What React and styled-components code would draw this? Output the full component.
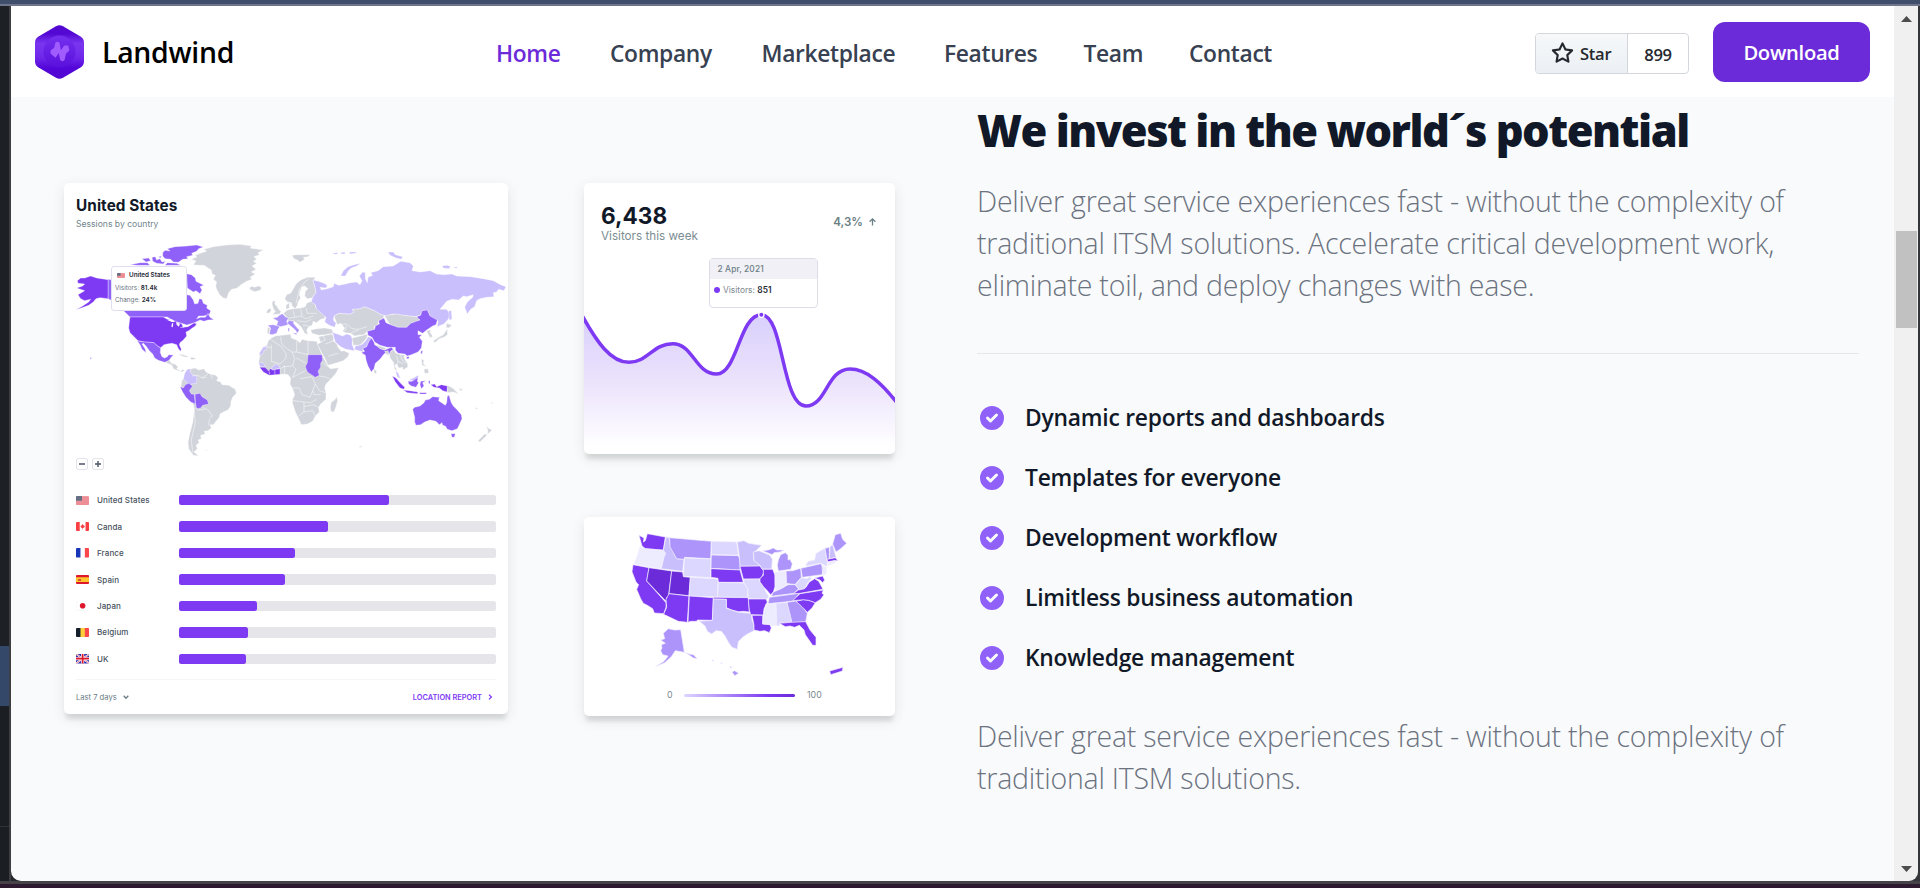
import React from "react";
import styled, { createGlobalStyle } from "styled-components";

const UI = '"Open Sans", "Noto Sans", sans-serif';
const CARD = 'Inter, "Liberation Sans", sans-serif';

const GlobalStyle = createGlobalStyle`
  * { box-sizing: border-box; }
  body { margin: 0; background: #3d3f43; font-family: ${UI}; overflow: hidden; }
  h2, p, ul { margin: 0; padding: 0; }
`;

/* ---------- window frame ---------- */
const Desktop = styled.div`
  display: grid;
  grid-template-rows: 6px 875px 7px;
  width: 1920px;
  height: 888px;
  overflow: hidden;
  background: #3d3f43;
`;
const TopEdge = styled.div`
  background: #3f4f6b;
  border-bottom: 2px solid #6e758d;
`;
const BottomEdge = styled.div`
  background: #2d1a30;
  border-top: 3px solid #454348;
`;
const Middle = styled.div`
  display: grid;
  grid-template-columns: 11px 1883px 24px 2px;
  background: linear-gradient(90deg, #24272b 50%, #34363a 50%);
`;
const LeftEdge = styled.div`
  border-right: 2px solid #3c3e42;
  background: linear-gradient(#1d2024 640px, #344869 640px, #344869 700px, #1b1e22 700px, #1b1e22 820px, #303236 820px, #303236 821px, #1b1e22 821px);
`;
const Viewport = styled.div`
  display: flex;
  flex-direction: column;
  background: #f9fafb;
  border-bottom-left-radius: 10px;
  overflow: hidden;
`;
const ScrollTrack = styled.div`
  display: flex;
  flex-direction: column;
  align-items: center;
  padding: 10px 0 9px;
  background: #f0f0f0;
  border-bottom-right-radius: 9px;
`;
const ScrollArrow = styled.svg`
  width: 11px;
  height: 6px;
  fill: #4d4d4d;
`;
const ScrollThumb = styled.div`
  width: 21px;
  height: 97px;
  margin: 209px 0 auto 1px;
  background: #c1c1c1;
`;

/* ---------- header ---------- */
const Header = styled.header`
  display: flex;
  align-items: center;
  height: 91px;
  flex: none;
  padding: 1px 24px 0;
  background: #fff;
`;
const Brand = styled.div`
  display: flex;
  align-items: center;
  gap: 18px;
  width: 461px;
  flex: none;
  font-size: 28.4px;
  font-weight: 600;
  letter-spacing: -0.28px;
  line-height: 40px;
  color: #000;
`;
const Logo = styled.svg`
  width: 49px;
  height: 54px;
`;
const Nav = styled.nav`
  display: flex;
  gap: 48px;
  flex: 1;
  padding-top: 3px;
`;
const NavLink = styled.a`
  width: ${(p) => p.$w}px;
  font-size: 22.8px;
  font-weight: 600;
  line-height: 36px;
  letter-spacing: -0.34px;
  white-space: nowrap;
  color: ${(p) => (p.$active ? "#6c2bd9" : "#374151")};
`;
const StarGroup = styled.div`
  display: flex;
  height: 41px;
  margin: 3px 24px 0 0;
  border: 1px solid #d3d7dc;
  border-radius: 4px;
  overflow: hidden;
  font-size: 16.6px;
  font-weight: 600;
  letter-spacing: -0.3px;
  line-height: 41px;
  color: #24292f;
`;
const StarButton = styled.div`
  display: flex;
  align-items: center;
  gap: 6px;
  width: 92px;
  padding-left: 15px;
  background: linear-gradient(#f6f8fa, #ebf0f4);
  border-right: 1px solid #d3d7dc;
`;
const StarCount = styled.div`
  width: 60px;
  text-align: center;
`;
const Download = styled.a`
  width: 157px;
  height: 60px;
  border-radius: 12px;
  background: #6c2bd9;
  color: #fff;
  font-size: 20.2px;
  font-weight: 600;
  letter-spacing: -0.3px;
  line-height: 61px;
  text-align: center;
`;

/* ---------- section ---------- */
const Section = styled.section`
  display: grid;
  grid-template-columns: 444px 311px 888px;
  column-gap: 76px;
  padding-left: 53px;
`;
const SideColumn = styled.div`
  display: flex;
  flex-direction: column;
  gap: 63px;
  padding-top: 86px;
`;
const Card = styled.article`
  position: relative;
  height: ${(p) => p.$h}px;
  border-radius: 5px;
  background: #fff;
  box-shadow: 0 7px 4px -2px rgba(40, 50, 45, 0.12), 0 4px 13px rgba(40, 50, 60, 0.1);
  font-family: ${CARD};
`;
const SessionsCard = styled(Card)`
  display: flex;
  flex-direction: column;
  padding: 13px 12px 0;
  margin-top: 86px;
`;
const CardTitle = styled.h2`
  font-size: 15.3px;
  line-height: 20px;
  font-weight: 700;
  letter-spacing: 0.08px;
  color: #111928;
`;
const CardSub = styled.p`
  margin-top: 1.5px;
  font-size: 8.6px;
  line-height: 12px;
  color: #72858c;
`;
const WorldFigure = styled.div`
  position: relative;
  height: 213px;
  margin: 11.5px -12px 0;
`;
const MapSvg = styled.svg`
  display: block;
  width: 100%;
  height: 100%;
  overflow: visible;
`;
const MapTooltip = styled.div`
  position: absolute;
  left: 47px;
  top: 25px;
  width: 76px;
  height: 45px;
  padding: 3px 3px 0;
  border: 1px solid #dfdff0;
  border-radius: 3px;
  background: #fff;
  font-size: 6.3px;
  line-height: 12px;
  color: #6b7280;
`;
const TipHead = styled.div`
  display: flex;
  align-items: center;
  gap: 4px;
  padding-left: 2px;
  margin-bottom: 1px;
  font-weight: 600;
  line-height: 11px;
  color: #1f2a37;
`;
const Strong = styled.b`
  font-weight: 600;
  color: #1f2a37;
`;
const ZoomRow = styled.div`
  display: flex;
  gap: 4px;
  margin-top: 4px;
`;
const ZoomButton = styled.svg`
  width: 12px;
  height: 12px;
  border: 1px solid #e3e5ea;
  border-radius: 2px;
  stroke: #4b5563;
  stroke-width: 1.4;
`;
const Bars = styled.div`
  display: grid;
  grid-auto-rows: 26.45px;
  margin-top: 17px;
`;
const BarRow = styled.div`
  display: grid;
  grid-template-columns: 21px 82px 1fr;
  align-items: center;
  font-size: 8px;
  font-weight: 500;
  letter-spacing: 0.1px;
  color: #475160;
`;
const FlagSvg = styled.svg`
  display: block;
  width: ${(p) => p.$w || 13.3}px;
  height: ${(p) => (p.$w ? 5.6 : 9.4)}px;
  border-radius: 1px;
`;
const Track = styled.div`
  height: 10.4px;
  border-radius: 2.5px;
  background: #e5e5ea;
`;
const Fill = styled.div`
  height: 100%;
  border-radius: 2.5px;
  background: #7e3af2;
`;
const CardFooter = styled.div`
  display: flex;
  justify-content: space-between;
  align-items: center;
  height: 35px;
  margin-top: 7px;
  padding-right: 3px;
  border-top: 1px solid #f5f5f7;
`;
const FooterItem = styled.span`
  display: flex;
  align-items: center;
  gap: ${(p) => (p.$link ? 5 : 6)}px;
  color: ${(p) => (p.$link ? "#7e3af2" : "#6b7c85")};
  font-weight: ${(p) => (p.$link ? 600 : 400)};
  font-size: ${(p) => (p.$link ? 7.4 : 7.6)}px;
`;
const Chevron = styled.svg`
  width: 6px;
  height: 6px;
  fill: none;
  stroke: currentColor;
  stroke-width: 1.3;
`;
const VisitorsHead = styled.div`
  display: flex;
  justify-content: space-between;
  padding: 20px 19px 0 17px;
`;
const BigNumber = styled.div`
  font-size: 22.6px;
  line-height: 26px;
  font-weight: 700;
  color: #111928;
`;
const NumberLabel = styled.div`
  font-size: 11.7px;
  line-height: 15px;
  color: #7b8d92;
`;
const Change = styled.div`
  display: flex;
  align-items: center;
  gap: 6px;
  height: 38px;
  font-size: 11.6px;
  font-weight: 600;
  color: #6a8084;
`;
const ChartSvg = styled.svg`
  position: absolute;
  left: 0;
  bottom: 0;
  width: 311px;
  height: 150px;
`;
const ChartTooltip = styled.div`
  position: absolute;
  left: 125px;
  top: 75px;
  width: 109px;
  height: 50px;
  border: 1px solid #dedce8;
  border-radius: 4px;
  background: #fff;
  font-size: 8.4px;
  color: #7b868d;
`;
const TipDate = styled.div`
  height: 20px;
  padding-left: 7.5px;
  background: #f1f0f6;
  line-height: 20px;
  font-weight: 500;
  letter-spacing: 0.1px;
  color: #6b7c85;
`;
const TipValue = styled.div`
  display: flex;
  align-items: center;
  gap: 3px;
  height: 21px;
  padding-left: 4px;
`;
const Dot = styled.i`
  width: 6px;
  height: 6px;
  border-radius: 50%;
  background: #7e3af2;
`;
const StatesSvg = styled.svg`
  display: block;
  width: 311px;
  height: 168px;
`;
const Legend = styled.div`
  display: grid;
  grid-template-columns: 17px 111px auto;
  align-items: center;
  padding-left: 83px;
  font-size: 8.8px;
  line-height: 20px;
  color: #7b8a90;
`;
const LegendBar = styled.div`
  height: 3px;
  border-radius: 2px;
  background: linear-gradient(90deg, #ddd6fe, #7e3af2 75%, #6c2bd9);
`;
const LegendMax = styled.span`
  padding-left: 12px;
`;

/* ---------- copy ---------- */
const Copy = styled.div`
  padding-top: 8px;
  margin-left: 6px;
`;
const Headline = styled.h2`
  height: 75px;
  font-size: 43.4px;
  line-height: 52px;
  font-weight: 800;
  letter-spacing: -1.5px;
  white-space: nowrap;
  color: #111928;
`;
const Lead = styled.p`
  font-size: 28.5px;
  line-height: 42px;
  font-weight: 300;
  letter-spacing: -0.23px;
  white-space: nowrap;
  color: #6b7280;
`;
const Features = styled.ul`
  display: grid;
  grid-auto-rows: 30px;
  row-gap: 30px;
  margin: 47px 0 42px;
  padding-top: 49px;
  border-top: 1px solid #e5e7eb;
  list-style: none;
`;
const Feature = styled.li`
  display: flex;
  align-items: center;
  gap: 18px;
  font-size: 22.8px;
  font-weight: 600;
  letter-spacing: -0.22px;
  line-height: 30px;
  color: #111928;
`;
const Check = styled.svg`
  width: 30px;
  height: 30px;
  fill: #9061f9;
`;

/* ---------- data ---------- */
const NAV = [
  ["Home", 66],
  ["Company", 103.5],
  ["Marketplace", 134.5],
  ["Features", 91.5],
  ["Team", 57.5],
  ["Contact", 85],
];

const COUNTRIES = [
  ["us", "United States", 66.2],
  ["ca", "Canda", 46.9],
  ["fr", "France", 36.5],
  ["es", "Spain", 33.3],
  ["jp", "Japan", 24.5],
  ["be", "Belgium", 21.8],
  ["uk", "UK", 21.1],
];

const C = { g: "#d1d5db", d: "#7e3af2", m: "#9061f9", s: "#ac94fa", l: "#cabffd", x: "#6c2bd9", p: "#dcd7fe", w: "#edebfe" };

const WORLD = [
  ["g", "M424,270 440,263 436,258 455,250 470,246 462,240 490,232 530,227 570,225 605,230 600,236 640,242 624,250 628,256 612,262 620,270 610,276 620,282 606,290 618,300 604,308 616,314 600,324 606,330 590,336 575,345 560,357 545,360 536,370 530,388 520,386 509,376 500,360 497,350 500,338 490,330 496,318 486,314 484,302 474,296 462,288 445,288 430,286 438,275Z"],
  ["g", "M598,356 606,350 612,354 626,350 634,354 632,362 615,367 603,363Z"],
  ["m", "M338,250 345,243 360,245 352,238 375,232 410,230 440,227 460,233 446,238 440,246 425,252 428,258 410,262 414,268 398,270 385,279 370,278 362,270 345,268 338,260Z"],
  ["m", "M306,264 316,262 320,272 330,268 336,278 346,276 340,284 320,282 308,276Z M276,268 296,266 302,274 288,278Z M270,280 292,280 300,288 262,288 240,286Z M325,262 334,260 332,266Z M352,280 380,282 392,288 345,288Z"],
  ["m", "M410,313 424,316 436,326 438,336 450,342 461,348 450,352 456,362 450,373 438,364 430,368 412,356Z"],
  ["m", "M174,330 200,334 400,330 410,376 420,378 430,392 434,404 444,402 448,388 456,390 460,402 472,408 470,416 482,424 478,436 460,440 446,440 440,448 452,444 466,444 474,432 480,444 492,451 474,452 462,456 450,452 434,460 410,467 395,462 372,456 352,443 240,443 222,426 200,400 174,388Z"],
  ["d", "M82,334 92,326 104,326 122,320 140,326 174,331 174,388 150,385 138,388 130,398 116,408 100,414 78,421 98,410 116,398 122,390 104,394 92,388 84,376 104,364 80,356 98,350 104,344 84,342Z"],
  ["d", "M240,443 340,443 352,450 376,455 384,462 394,462 400,474 414,472 432,461 440,463 436,470 424,478 416,484 408,488 410,500 400,512 390,520 388,526 394,540 391,546 384,536 380,526 366,522 352,524 342,526 332,535 322,530 312,520 300,519 284,518 264,514 250,500 240,490 236,476 238,458Z"],
  ["m", "M262,515 284,518 300,519 312,520 322,530 332,536 331,550 336,562 344,566 352,562 356,556 370,557 362,566 356,576 344,579 325,573 314,566 308,554 298,544 288,530 280,522 276,524 286,540 288,550 276,540 270,526Z"],
  ["g", "M346,579 358,572 364,582 374,584 384,592 380,598 392,606 398,600 404,604 396,608 384,604 370,598 366,588Z M384,554 400,556 416,562 408,564 396,560Z M420,564 434,565 438,569 424,571Z"],
  ["g", "M424,598 436,596 446,602 462,598 468,608 480,614 498,618 504,626 500,634 512,638 516,646 536,648 556,660 559,672 548,684 543,696 542,710 534,722 520,728 510,734 508,744 498,756 490,766 480,766 484,776 474,784 462,786 466,794 452,798 454,808 444,812 448,820 438,828 442,838 432,848 446,860 430,858 416,838 414,818 420,790 428,760 433,720 428,700 404,680 392,655 396,632 412,620Z"],
  ["l", "M404,612 412,600 424,598 420,606 426,616 440,620 440,642 424,644 418,654 412,640 400,630Z"],
  ["m", "M390,652 400,656 406,646 416,642 428,650 418,664 424,674 433,675 436,704 422,698 408,684 398,668Z M435,675 450,672 456,682 472,692 476,704 458,708 452,716 440,718 436,700Z"],
  ["g", "M726,258 740,256 780,256 774,262 760,264 764,270 750,279 742,272 732,268Z"],
  ["g", "M704,388 710,376 722,372 730,358 738,344 752,332 772,324 796,324 790,336 794,348 798,370 786,386 772,388 764,380 766,366 774,358 764,350 756,352 750,366 748,378 752,386 744,398 742,408 736,418 726,410 724,400 712,398Z"],
  ["g", "M668,394 676,396 674,404 682,412 686,420 693,426 690,434 668,436 676,426 670,418 666,404Z M650,424 660,416 664,422 660,430 650,432Z M708,408 718,400 718,416 708,420Z"],
  ["g", "M700,432 712,422 730,418 752,416 766,412 770,402 784,396 796,406 798,416 812,430 828,438 822,448 812,450 800,460 790,456 786,468 776,472 770,482 774,496 764,492 754,474 742,462 730,454 716,458 712,446Z"],
  ["s", "M668,446 682,444 688,438 697,433 706,442 715,447 710,456 714,466 700,470 690,472 680,468 684,456Z M653,468 668,466 690,471 684,480 680,492 666,496 658,494 662,476Z M710,460 718,454 732,456 730,462 742,476 748,482 742,492 736,482 722,470Z M728,490 742,492 738,496Z M714,476 718,476 718,486 714,486Z"],
  ["g", "M653,474 660,476 657,494 652,492Z M782,482 800,478 824,476 846,480 850,492 826,496 806,498 786,492Z"],
  ["g", "M664,506 676,500 700,497 722,495 724,506 740,512 750,520 756,510 774,514 800,516 806,532 814,552 824,572 834,590 842,598 866,595 858,612 842,630 828,644 824,656 828,672 828,690 812,704 806,714 808,728 796,740 788,756 772,764 754,766 746,748 736,728 727,700 728,690 734,676 728,658 720,644 722,626 714,616 698,614 680,617 655,617 640,606 630,592 626,576 630,560 628,552 640,532 652,526 654,516Z"],
  ["l", "M626,556 640,533 652,531 650,540 642,543 638,554Z M626,580 640,580 646,592 630,592Z M664,596 678,584 688,590 690,597 668,602Z"],
  ["d", "M629,594 644,594 652,600 654,604 662,598 668,602 690,598 690,615 658,618 640,608Z"],
  ["m", "M774,556 816,556 818,572 812,582 812,594 804,606 808,618 796,624 784,616 772,608 766,592 772,580Z"],
  ["g", "M844,698 854,692 860,682 863,694 858,712 852,727 844,728 841,714Z"],
  ["g", "M802,524 812,520 806,502 846,494 852,504 850,514 862,526 864,534 874,546 882,544 898,552 894,562 880,574 856,582 834,588 826,570 814,548Z"],
  ["l", "M846,489 862,494 878,500 890,494 902,498 908,510 906,524 912,540 940,548 938,540 950,532 958,514 966,506 954,502 946,516 934,526 916,530 912,544 888,540 872,532 856,518Z"],
  ["g", "M906,506 930,500 954,494 950,506 942,516 930,527 910,528Z"],
  ["g", "M852,440 866,432 900,434 912,428 906,420 930,418 944,412 962,420 974,424 990,434 1002,438 1000,448 986,454 984,466 972,472 974,480 952,486 942,496 926,498 914,500 902,492 886,490 878,486 884,476 872,462 862,466Z"],
  ["l", "M788,332 806,336 822,342 832,348 828,356 810,354 814,362 832,358 850,352 852,342 866,348 886,344 902,340 920,338 930,346 936,334 928,320 938,308 946,310 946,328 952,340 954,324 968,318 962,310 984,304 1000,292 1030,290 1052,276 1080,280 1090,290 1086,304 1112,308 1140,304 1160,314 1180,316 1206,314 1220,320 1262,322 1300,328 1330,334 1352,346 1368,352 1362,364 1346,360 1340,368 1330,370 1332,382 1310,384 1290,388 1280,394 1274,412 1262,420 1252,434 1244,414 1252,398 1268,384 1270,376 1250,382 1240,380 1226,392 1206,390 1190,396 1170,420 1190,420 1200,434 1196,448 1182,464 1162,472 1164,454 1140,442 1134,424 1116,424 1112,436 1096,442 1060,438 1030,434 1008,440 1002,438 990,434 974,424 944,412 930,418 906,420 912,428 900,434 866,432 852,440 850,452 858,462 854,474 838,468 824,458 828,444 812,430 800,420 796,406 784,398 788,384 798,370 794,348Z"],
  ["l", "M872,320 880,304 894,292 912,286 932,282 920,290 904,296 894,306 886,320Z M1014,248 1030,248 1036,256 1058,262 1054,270 1038,266 1020,258Z M1176,290 1192,288 1202,292 1196,298 1180,296Z M1208,294 1222,292 1220,297Z M850,251 862,250 864,254 852,255Z M872,250 884,248 886,253 874,254Z M898,248 920,248 916,252 900,254Z M1196,424 1204,424 1206,450 1198,452Z"],
  ["g", "M1004,440 1020,436 1040,434 1060,438 1096,442 1112,446 1100,458 1082,462 1070,474 1044,474 1020,466Z"],
  ["m", "M952,486 974,480 976,470 988,464 986,454 1002,446 1008,460 1022,466 1044,474 1070,474 1082,462 1110,452 1100,442 1112,438 1116,424 1132,422 1140,440 1162,452 1158,466 1148,470 1130,482 1118,492 1104,484 1104,496 1116,496 1108,504 1117,516 1114,536 1104,548 1084,556 1072,560 1064,554 1044,552 1036,542 1036,534 1012,534 990,528 974,518 966,504 954,498Z M1113,544 1118,544 1116,554 1112,552Z M1070,562 1078,562 1076,568 1070,568Z"],
  ["m", "M934,550 944,546 938,538 950,532 956,518 964,506 972,518 974,526 996,538 1004,542 1024,534 1030,540 1022,546 1020,556 1012,548 1002,554 990,570 976,582 972,598 964,608 954,590 948,572 946,558Z"],
  ["g", "M976,526 990,530 1008,536 1004,542 990,538Z M1004,546 1014,544 1018,556 1010,556Z M972,600 980,604 978,614 972,610Z M1018,552 1030,540 1038,552 1052,556 1064,556 1062,566 1072,582 1074,592 1060,602 1058,594 1046,596 1040,584 1034,588 1042,606 1034,600 1030,578 1020,566Z"],
  ["l", "M1036,606 1044,610 1052,628 1042,622Z M1076,632 1090,626 1104,618 1106,624 1090,634Z"],
  ["g", "M1130,484 1142,482 1140,490 1148,500 1142,506 1136,498Z M1190,462 1206,468 1196,476 1188,474Z M1192,478 1192,496 1182,504 1168,508 1154,520 1150,514 1166,504 1180,496Z M1114,570 1122,572 1120,584 1130,592 1116,588Z M1122,600 1134,598 1136,612 1124,612Z M1192,648 1208,656 1226,674 1210,668 1192,670Z M1228,656 1240,662 1230,664Z M1276,714 1284,718 1278,720Z"],
  ["d", "M1027,620 1038,626 1052,642 1064,654 1062,660 1050,656 1036,638Z M1060,662 1078,664 1104,668 1102,673 1072,670Z M1108,670 1130,670 1128,674 1110,674Z M1142,646 1154,644 1160,652 1174,646 1192,650 1191,668 1178,664 1168,656 1152,654Z"],
  ["m", "M1074,636 1086,636 1104,624 1102,636 1106,640 1098,654 1084,650 1076,644Z M1112,636 1128,634 1118,640 1122,650 1114,658 1110,646Z M1136,634 1140,634 1140,644 1136,642Z"],
  ["m", "M1088,720 1094,714 1110,710 1122,700 1126,692 1138,690 1148,682 1168,684 1166,694 1186,708 1190,700 1192,680 1197,678 1204,700 1210,710 1222,722 1234,736 1236,748 1228,766 1222,778 1206,784 1192,780 1186,770 1178,768 1176,760 1168,766 1158,756 1140,752 1124,758 1112,766 1098,768 1094,758 1094,744Z M1203,793 1216,793 1213,804 1206,804Z M120,564 125,566 121,570Z"],
  ["g", "M1308,768 1314,776 1326,782 1318,790 1312,794 1314,784Z M1304,794 1312,796 1300,808 1290,818 1284,814Z M928,831 936,831 936,834 928,834Z M466,842 472,842 470,845Z M1322,700 1328,698 1326,704Z"],
];

const WORLD_BORDERS =
  "M664,512 692,530 708,552 M692,502 694,520 700,530 M740,514 740,548 774,556 M774,514 774,556 M700,530 726,548 740,548 M664,526 664,576 690,584 708,566 708,552 M640,532 664,534 M726,548 734,566 728,590 700,592 M690,600 704,590 704,614 M728,590 738,600 728,624 766,604 M738,566 766,580 M750,628 786,622 796,644 788,664 780,684 756,676 748,656 728,656 M808,620 830,624 842,630 M818,580 842,598 M796,644 808,664 826,670 M788,664 792,676 812,676 M728,694 762,698 782,700 800,690 M762,698 762,728 746,740 M762,712 790,706 806,714 M762,728 788,724 796,740 M730,424 734,444 716,446 M734,444 752,440 768,448 790,440 M752,418 756,440 M768,416 772,432 800,432 M742,454 766,458 784,450 M758,468 776,470 M738,402 748,360 764,338 776,330 M862,466 890,464 906,478 926,480 M890,470 884,486 M926,480 950,472 M904,490 926,482 M1040,560 1044,576 1060,584 M1052,558 1056,572 1068,582 M1044,576 1040,590 M426,620 444,618 456,626 474,614 M456,626 470,624 M484,616 486,628 M430,706 436,760 424,812 428,850 M458,714 474,722 488,740 478,746 M438,716 444,722 464,720 M478,750 476,768 M850,494 852,514 826,524 M836,560 864,552 M820,500 826,512 806,520 M657,602 659,616 M674,602 675,616";

const STATES = [
  ["d", "237,106 252,114 250,126 256,122 262,101 316,111 310,150 290,149 268,147 256,146 246,138"],
  ["w", "240,140 256,146 268,147 290,149 310,151 317,160 312,172 304,207 222,192 230,172"],
  ["d", "219,194 267,203 260,243 318,308 318,322 311,341 283,339 278,326 262,316 250,310 242,296 230,268 236,254 228,246 216,215"],
  ["x", "267,203 335,213 325,292 320,292 318,304 260,243"],
  ["l", "318,111 329,113 330,132 340,150 342,162 350,176 372,177 368,214 304,206 312,172 317,160 310,151"],
  ["s", "329,113 454,124 452,176 374,172 372,178 350,176 342,162 330,140"],
  ["p", "374,174 453,177 452,233 370,228"],
  ["x", "335,213 368,216 370,230 391,232 387,287 327,281"],
  ["p", "391,232 474,237 473,291 387,288"],
  ["d", "327,281 387,288 382,367 355,364 311,343 320,322 318,298"],
  ["d", "388,288 460,293 457,361 412,360 410,364 392,364 384,367"],
  ["p", "454,124 530,126 535,165 454,164"],
  ["s", "454,165 535,167 540,180 540,210 453,205"],
  ["d", "453,206 540,210 550,247 475,247 474,235 453,232"],
  ["p", "475,247 552,249 563,266 563,292 473,291"],
  ["d", "460,292 565,293 568,336 550,334 535,335 515,330 499,323 499,298 460,297"],
  ["l", "460,297 499,298 499,325 515,330 535,337 574,340 576,360 582,375 582,392 562,402 548,412 535,425 532,448 516,442 506,428 495,408 484,394 468,392 455,402 442,394 435,378 418,364 457,361"],
  ["l", "532,126 552,122 566,130 605,136 590,150 580,160 582,182 605,198 540,199 538,170"],
  ["d", "540,199 600,198 612,214 606,230 598,237 550,237"],
  ["p", "550,238 598,237 602,250 612,262 618,276 627,290 620,298 565,296 563,266 552,248"],
  ["d", "565,297 618,297 622,306 612,326 610,345 572,344 568,330"],
  ["d", "576,346 608,346 608,372 630,374 634,384 628,398 614,392 600,394 582,390 582,375"],
  ["l", "580,156 597,152 616,160 630,166 637,178 635,207 606,207 600,196 582,182"],
  ["d", "610,208 638,208 645,225 645,260 640,276 632,284 620,270 612,262 600,246 600,236 610,226"],
  ["s", "655,180 662,164 676,158 684,166 684,180 690,178 697,192 692,208 655,213 652,196"],
  ["s", "607,152 625,150 640,144 650,150 672,150 660,156 642,158 636,164 622,158"],
  ["w", "645,217 677,213 680,254 664,266 646,270"],
  ["s", "678,213 698,212 722,205 724,232 706,253 692,252 680,250"],
  ["s", "634,288 640,276 664,266 684,254 706,254 716,266 702,280 640,288"],
  ["s", "628,292 718,280 706,296 698,303 624,312"],
  ["w", "618,312 648,309 650,377 632,378 630,372 608,372 612,340"],
  ["p", "648,310 681,307 694,350 694,366 658,370 660,377 650,377"],
  ["s", "681,307 708,303 728,320 742,340 737,366 696,368 692,350"],
  ["d", "658,370 694,367 737,365 750,390 768,412 768,436 758,436 736,404 732,390 718,376 704,382 690,378 676,380"],
  ["d", "708,304 730,299 746,301 766,308 756,324 742,337 726,320"],
  ["d", "698,302 720,281 790,270 786,280 792,284 782,298 766,308 746,301 730,299"],
  ["d", "700,281 718,268 738,262 748,246 764,236 776,244 786,262 788,268 720,280"],
  ["p", "706,254 724,233 740,236 752,230 754,236 742,250 734,266 718,270"],
  ["s", "723,205 782,191 792,206 786,224 727,232"],
  ["p", "737,196 744,184 764,180 768,160 795,145 802,190 800,200 782,190 740,198"],
  ["s", "795,145 808,142 808,176 801,180"],
  ["l", "810,140 818,134 828,172 808,177"],
  ["d", "802,178 826,173 834,182 822,182 803,186"],
  ["w", "803,186 826,182 824,190 804,196"],
  ["s", "818,132 826,104 842,100 848,118 860,130 842,146 828,156"],
  ["w", "786,197 800,203 798,222 788,226"],
  ["d", "764,234 788,228 794,240 788,248 780,240"],
  ["s", "302,420 314,416 310,400 325,386 344,390 362,389 373,457 356,454 346,452 334,470 314,488 286,500 312,484 324,468 308,464 302,452 306,444 304,434 316,430"],
  ["s", "374,456 388,462 400,464 412,476 400,474 386,464"],
  ["s", "516,516 524,512 536,520 524,527"],
  ["s", "510,499 516,502 512,505"],
  ["s", "457,480 461,480 461,483 457,483"],
  ["s", "482,488 487,490 484,492"],
  ["d", "809,513 849,502 847,513 812,524"],
];

function Flag({ code, w }) {
  const art = {
    us: (
      <>
        <path fill="#f19aa0" d="M0 0h20v14H0z" />
        <path stroke="#e5737f" d="M0 3h20M0 6h20M0 9h20M0 12h20" strokeWidth=".9" />
        <path fill="#667085" d="M0 0h9v7H0z" />
      </>
    ),
    ca: (
      <>
        <path fill="#fff" d="M0 0h20v14H0z" />
        <path fill="#f93f42" d="M0 0h5.600v14H0zM14.400 0H20v14h-5.600zM10 3l1.200 2 2.200 1-1.400 2.600-1.600.2V11h-.8V8.800L8 8.600 6.600 6l2.200-1z" />
      </>
    ),
    fr: (
      <>
        <path fill="#fff" d="M0 0h20v14H0z" />
        <path fill="#1837b8" d="M0 0h6.700v14H0z" />
        <path fill="#f9474b" d="M13.300 0H20v14h-6.700z" />
      </>
    ),
    es: (
      <>
        <path fill="#dd172c" d="M0 0h20v14H0z" />
        <path fill="#ffc52e" d="M0 3.500h20v7H0z" />
        <path fill="#d8562b" d="M3 6h4.500v3H3z" />
      </>
    ),
    jp: (
      <>
        <path fill="#fff" stroke="#f5f5f5" d="M0 0h20v14H0z" />
        <circle cx="10" cy="7" r="4.200" fill="#dd172c" />
      </>
    ),
    be: (
      <>
        <path fill="#ffce3c" d="M0 0h20v14H0z" />
        <path fill="#141e2c" d="M0 0h6.700v14H0z" />
        <path fill="#f9474b" d="M13.300 0H20v14h-6.700z" />
      </>
    ),
    uk: (
      <>
        <path fill="#2a2fb0" d="M0 0h20v14H0z" />
        <path stroke="#fff" strokeWidth="2.600" d="M0 0l20 14M20 0L0 14" />
        <path stroke="#e2344a" strokeWidth=".9" d="M0 0l20 14M20 0L0 14" />
        <path stroke="#fff" strokeWidth="4.600" d="M10 0v14M0 7h20" />
        <path stroke="#dd172c" strokeWidth="2.600" d="M10 0v14M0 7h20" />
      </>
    ),
  };
  return (
    <FlagSvg $w={w} viewBox="0 0 20 14" preserveAspectRatio="none">
      {art[code]}
    </FlagSvg>
  );
}

function LandwindLogo() {
  return (
    <Logo viewBox="0 0 49 54">
      <defs>
        <linearGradient id="hex" x1="0" y1="0" x2="0" y2="1">
          <stop offset="0" stopColor="#5207d0" />
          <stop offset=".16" stopColor="#5408d4" />
          <stop offset=".34" stopColor="#7a35f0" />
          <stop offset=".6" stopColor="#6f28ea" />
          <stop offset=".8" stopColor="#5306d8" />
          <stop offset="1" stopColor="#5207d0" />
        </linearGradient>
        <linearGradient id="core" x1="0" y1="0" x2="0" y2="1">
          <stop offset="0" stopColor="#7430ee" />
          <stop offset="1" stopColor="#5a10dc" />
        </linearGradient>
      </defs>
      <path fill="url(#hex)" d="M21 1.200Q24.500-.8 28 1.200L45.500 11.500Q49 13.600 49 17.500V36.500Q49 40.400 45.500 42.500L28 52.800Q24.500 54.800 21 52.800L3.500 42.500Q0 40.400 0 36.500V17.500Q0 13.600 3.500 11.500Z" />
      <circle cx="24.500" cy="26.500" r="16" fill="url(#core)" />
      <path fill="#a05cff" d="M20.500 17.500q2-1.800 4 .3l1.400 7.400 3.300-4.800 4 .2 1.200 5-3.400 3-1.400 6.300q-2.200 2.600-4.400.2l-1.400-7-3.300 4.600-5-4.200.2-3.300 3.400-2.200z" />
    </Logo>
  );
}

function WorldCard() {
  return (
    <SessionsCard $h={531}>
      <CardTitle>United States</CardTitle>
      <CardSub>Sessions by country</CardSub>
      <WorldFigure>
        <MapSvg viewBox="42 215 1332 639">
          {WORLD.map(([c, d], i) => (
            <path key={i} d={d} fill={C[c]} stroke="#fff" strokeWidth="1.400" strokeOpacity=".75" strokeLinejoin="round" />
          ))}
          <path d={WORLD_BORDERS} fill="none" stroke="#fff" strokeWidth="1.800" strokeOpacity=".8" />
          <path d="M352,452 366,450 376,458 366,458Z M366,462 370,462 368,474 364,472Z M378,458 390,464 386,472 380,466Z M388,476 402,470 402,474Z" fill="#fff" />
        </MapSvg>
        <MapTooltip>
          <TipHead>
            <Flag code="us" w={8} />
            United States
          </TipHead>
          <div>
            Visitors: <Strong>81.4k</Strong>
          </div>
          <div>
            Change: <Strong>24%</Strong>
          </div>
        </MapTooltip>
      </WorldFigure>
      <ZoomRow>
        <ZoomButton viewBox="0 0 10 10"><path d="M2 5h6" /></ZoomButton>
        <ZoomButton viewBox="0 0 10 10"><path d="M2 5h6M5 2v6" /></ZoomButton>
      </ZoomRow>
      <Bars>
        {COUNTRIES.map(([code, name, pct]) => (
          <BarRow key={code}>
            <Flag code={code} />
            <span>{name}</span>
            <Track>
              <Fill style={{ width: `${pct}%` }} />
            </Track>
          </BarRow>
        ))}
      </Bars>
      <CardFooter>
        <FooterItem>
          Last 7 days
          <Chevron viewBox="0 0 6 6"><path d="M.7 1.700 3 4.200 5.300 1.700" /></Chevron>
        </FooterItem>
        <FooterItem $link>
          LOCATION REPORT
          <Chevron viewBox="0 0 6 6"><path d="M2 .6 4.400 3 2 5.400" /></Chevron>
        </FooterItem>
      </CardFooter>
    </SessionsCard>
  );
}

const CURVE =
  "M66,436 C110,515 152,577 207,577 C262,577 280,521 338,521 C400,521 405,612 470,612 C532,612 538,434 604,434 C672,434 664,708 738,708 C800,708 800,597 870,597 C920,597 965,640 1010,697";

function VisitorsCard() {
  return (
    <Card $h={271}>
      <VisitorsHead>
        <div>
          <BigNumber>6,438</BigNumber>
          <NumberLabel>Visitors this week</NumberLabel>
        </div>
        <Change>
          4,3%
          <svg width="7" height="8" viewBox="0 0 7 8" fill="none" stroke="currentColor" strokeWidth="1.300">
            <path d="M3.500 7.500V1M.6 3.700 3.500.9l2.900 2.800" />
          </svg>
        </Change>
      </VisitorsHead>
      <ChartSvg viewBox="72 402 933 450">
        <defs>
          <linearGradient id="area" x1="0" y1="434" x2="0" y2="830" gradientUnits="userSpaceOnUse">
            <stop offset="0" stopColor="#d9d0fd" />
            <stop offset=".5" stopColor="#ebe2fc" />
            <stop offset="1" stopColor="#fff" />
          </linearGradient>
        </defs>
        <path d={`${CURVE} V840 H66 Z`} fill="url(#area)" />
        <path d={CURVE} fill="none" stroke="#7e3af2" strokeWidth="10.500" />
        <circle cx="604" cy="434" r="8" fill="#7e3af2" stroke="#fff" strokeWidth="4" />
      </ChartSvg>
      <ChartTooltip>
        <TipDate>2 Apr, 2021</TipDate>
        <TipValue>
          <Dot />
          <span>
            Visitors: <Strong>851</Strong>
          </span>
        </TipValue>
      </ChartTooltip>
    </Card>
  );
}

function StatesCard() {
  return (
    <Card $h={199}>
      <StatesSvg viewBox="72 51 933 504">
        {STATES.map(([c, pts], i) => (
          <polygon key={i} points={pts} fill={C[c]} stroke="#f3f0ff" strokeWidth="2" strokeLinejoin="round" />
        ))}
      </StatesSvg>
      <Legend>
        <span>0</span>
        <LegendBar />
        <LegendMax>100</LegendMax>
      </Legend>
    </Card>
  );
}

export default function App() {
  return (
    <Desktop>
      <GlobalStyle />
      <TopEdge />
      <Middle>
        <LeftEdge />
        <Viewport>
          <Header>
            <Brand>
              <LandwindLogo />
              Landwind
            </Brand>
            <Nav>
              {NAV.map(([label, w], i) => (
                <NavLink key={label} $w={w} $active={i === 0}>
                  {label}
                </NavLink>
              ))}
            </Nav>
            <StarGroup>
              <StarButton>
                <svg width="23" height="23" viewBox="0 0 16 16" fill="#24292f">
                  <path d="M8 .25a.75.75 0 01.673.418l1.882 3.815 4.210.612a.75.75 0 01.416 1.279l-3.046 2.970.719 4.192a.75.75 0 01-1.088.791L8 12.347l-3.766 1.980a.75.75 0 01-1.088-.79l.72-4.194L.818 6.374a.75.75 0 01.416-1.280l4.210-.611L7.327.668A.75.75 0 018 .25zm0 2.445L6.615 5.500a.75.75 0 01-.564.410l-3.097.450 2.240 2.184a.75.75 0 01.216.664l-.528 3.084 2.769-1.456a.75.75 0 01.698 0l2.770 1.456-.53-3.084a.75.75 0 01.216-.664l2.240-2.183-3.096-.45a.75.75 0 01-.564-.41L8 2.694z" />
                </svg>
                Star
              </StarButton>
              <StarCount>899</StarCount>
            </StarGroup>
            <Download>Download</Download>
          </Header>
          <Section>
            <WorldCard />
            <SideColumn>
              <VisitorsCard />
              <StatesCard />
            </SideColumn>
            <Copy>
              <Headline>We invest in the world´s potential</Headline>
              <Lead>
                Deliver great service experiences fast - without the complexity of
                <br />
                traditional ITSM solutions. Accelerate critical development work,
                <br />
                eliminate toil, and deploy changes with ease.
              </Lead>
              <Features>
                {[
                  "Dynamic reports and dashboards",
                  "Templates for everyone",
                  "Development workflow",
                  "Limitless business automation",
                  "Knowledge management",
                ].map((t) => (
                  <Feature key={t}>
                    <Check viewBox="0 0 20 20">
                      <path fillRule="evenodd" clipRule="evenodd" d="M10 18a8 8 0 100-16 8 8 0 000 16zm3.707-9.293a1 1 0 00-1.414-1.414L9 10.586 7.707 9.293a1 1 0 00-1.414 1.414l2 2a1 1 0 001.414 0l4-4z" />
                    </Check>
                    {t}
                  </Feature>
                ))}
              </Features>
              <Lead>
                Deliver great service experiences fast - without the complexity of
                <br />
                traditional ITSM solutions.
              </Lead>
            </Copy>
          </Section>
        </Viewport>
        <ScrollTrack>
          <ScrollArrow viewBox="0 0 11 6"><path d="M0 6 5.500 0 11 6z" /></ScrollArrow>
          <ScrollThumb />
          <ScrollArrow viewBox="0 0 11 6"><path d="M0 0 5.500 6 11 0z" /></ScrollArrow>
        </ScrollTrack>
        <div />
      </Middle>
      <BottomEdge />
    </Desktop>
  );
}
